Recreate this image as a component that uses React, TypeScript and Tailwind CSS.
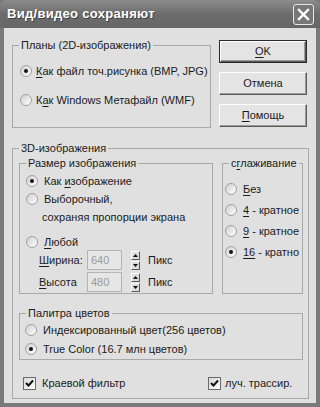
import React from 'react';

const Radio = ({ checked }: { checked?: boolean }) => (
  <span className="inline-flex items-center justify-center w-[12px] h-[12px] shrink-0 rounded-full border border-[#a2a2a2] bg-gradient-to-br from-[#cfcfcf] to-white">
    {checked && <span className="w-[4px] h-[4px] rounded-full bg-[#151515]" />}
  </span>
);

const Check = () => (
  <span className="inline-flex items-center justify-center w-[13px] h-[13px] shrink-0 border border-[#6a6a6a] bg-gradient-to-br from-[#d8d8d8] to-white">
    <svg width="9" height="9" viewBox="0 0 9 9">
      <path d="M1 4 L3.5 6.5 L8 1.5" stroke="#111" strokeWidth="2" fill="none" />
    </svg>
  </span>
);

const Group = ({ title, className = '', children }: { title: React.ReactNode; className?: string; children?: React.ReactNode }) => (
  <fieldset className={`border border-[#a9a9a9] min-w-0 ${className}`}>
    <legend className="ml-[6px] px-[2px] leading-[14px]">{title}</legend>
    {children}
  </fieldset>
);

const Btn = ({ children, def }: { children: React.ReactNode; def?: boolean }) => (
  <div className={`h-[23px] w-[88px] ${def ? 'border border-[#2a2a2a]' : ''}`}>
    <div className="h-full w-full flex items-center justify-center border border-t-white border-l-white border-b-[#5a5a5a] border-r-[#5a5a5a] bg-[#e4e4e4] shadow-[inset_-1px_-1px_0_#9a9a9a]">
      {children}
    </div>
  </div>
);

const Spin = () => (
  <div className="flex flex-col gap-[1px] w-[9px]">
    {[0, 1].map(i => (
      <div key={i} className="h-[9px] flex items-center justify-center border border-t-white border-l-white border-b-[#5a5a5a] border-r-[#5a5a5a] bg-[#dcdcdc]">
        <svg width="5" height="3" viewBox="0 0 5 3">
          <path d={i === 0 ? 'M0 3 L2.5 0 L5 3 Z' : 'M0 0 L2.5 3 L5 0 Z'} fill="#111" />
        </svg>
      </div>
    ))}
  </div>
);

const U = ({ children }: { children: React.ReactNode }) => <span className="underline underline-offset-2">{children}</span>;

const Row = ({ className = '', children }: { className?: string; children: React.ReactNode }) => (
  <div className={`flex items-center whitespace-nowrap ${className}`}>{children}</div>
);

export default function App() {
  return (
    <div className="w-[320px] h-[407px] flex flex-col bg-[#7a7a7a] text-[11px] text-[#1b1b1b] font-['Liberation_Sans',Arial,sans-serif] overflow-hidden">
      {/* title bar */}
      <div className="h-[28px] shrink-0 flex items-center justify-between pl-[7px] pr-[6px] rounded-t-[7px] bg-gradient-to-b from-[#8c8c8c] via-[#6c6c6c] to-[#666666]">
        <span className="text-white font-bold text-[13px] tracking-[0.3px] [text-shadow:1px_1px_0_#444]">Вид/видео сохраняют</span>
        <div className="w-[21px] h-[21px] rounded-[3px] border border-[#e8e8e8] bg-[#777] flex items-center justify-center">
          <svg width="13" height="13" viewBox="0 0 13 13">
            <path d="M2 2 L11 11 M11 2 L2 11" stroke="#fff" strokeWidth="2.4" strokeLinecap="square" />
          </svg>
        </div>
      </div>

      {/* body */}
      <div className="flex-1 mx-[4px] mb-[4px] bg-[#e0e0e0] pl-[8px] pt-[10px]">
        <div className="flex">
          <Group title="Планы (2D-изображения)" className="w-[199px] h-[90px]">
            <div className="pt-[11px] pl-[7px] flex flex-col gap-[13px]">
              <Row className="h-[16px] gap-[4px]"><Radio checked /><span><U>К</U>ак файл точ.рисунка (BMP, JPG)</span></Row>
              <Row className="h-[16px] gap-[4px]"><Radio /><span>К<U>а</U>к Windows Метафайл (WMF)</span></Row>
            </div>
          </Group>
          <div className="ml-[8px] pt-[2px] flex flex-col gap-[9px]">
            <Btn def><span><U>O</U>K</span></Btn>
            <Btn>Отмена</Btn>
            <Btn><span><U>П</U>омощь</span></Btn>
          </div>
        </div>

        <Group title="3D-изображения" className="mt-[13px] w-[297px] h-[258px]">
          <div className="pl-[6px] pt-[1px]">
            <div className="flex gap-[9px]">
              <Group title="Размер изображения" className="w-[194px] h-[138px]">
                <div className="pl-[6px] pt-[2px]">
                  <Row className="h-[18px] gap-[6px]"><Radio checked /><span>Как <U>и</U>зображение</span></Row>
                  <Row className="h-[18px] gap-[6px]"><Radio /><span>Выборочный,</span></Row>
                  <Row className="h-[18px] pl-[16px]">сохраняя пропорции экрана</Row>
                  <Row className="h-[16px] gap-[6px] mt-[8px]"><Radio /><span><U>Л</U>юбой</span></Row>
                  <Row className="h-[20px] pl-[13px]">
                    <span className="w-[48px]"><U>Ш</U>ирина:</span>
                    <div className="w-[35px] h-[20px] border border-[#b4b4b4] bg-[#e6e6e6] pl-[3px] text-[#9c9c9c] leading-[18px]">640</div>
                    <div className="ml-[9px]"><Spin /></div>
                    <span className="ml-[8px]">Пикс</span>
                  </Row>
                  <Row className="h-[20px] pl-[13px] mt-[2px]">
                    <span className="w-[48px]"><U>В</U>ысота</span>
                    <div className="w-[35px] h-[20px] border border-[#b4b4b4] bg-[#e6e6e6] pl-[3px] text-[#9c9c9c] leading-[18px]">480</div>
                    <div className="ml-[9px]"><Spin /></div>
                    <span className="ml-[8px]">Пикс</span>
                  </Row>
                </div>
              </Group>
              <Group title={<span>с<U>г</U>лаживание</span>} className="w-[81px] h-[138px]">
                <div className="pl-[2px] pt-[11px] flex flex-col gap-[5px]">
                  <Row className="h-[16px] gap-[6px]"><Radio /><span><U>Б</U>ез</span></Row>
                  <Row className="h-[16px] gap-[6px]"><Radio /><span><U>4</U> - кратное</span></Row>
                  <Row className="h-[16px] gap-[6px]"><Radio /><span><U>9</U> - кратное</span></Row>
                  <Row className="h-[16px] gap-[6px]"><Radio checked /><span><U>16</U> - кратно</span></Row>
                </div>
              </Group>
            </div>

            <Group title="Палитра цветов" className="mt-[12px] w-[284px] h-[54px]">
              <div className="pl-[5px] pt-[2px] flex flex-col gap-[3px]">
                <Row className="h-[16px] gap-[6px]"><Radio /><span>Индексированный цвет(256 цветов)</span></Row>
                <Row className="h-[16px] gap-[6px]"><Radio checked /><span>True Color (16.7 млн цветов)</span></Row>
              </div>
            </Group>

            <div className="mt-[17px] flex pl-[4px]">
              <Row className="w-[185px] h-[13px] gap-[6px]"><Check /><span>Краевой фильтр</span></Row>
              <Row className="h-[13px] gap-[4px]"><Check /><span>луч. трассир.</span></Row>
            </div>
          </div>
        </Group>
      </div>
    </div>
  );
}
